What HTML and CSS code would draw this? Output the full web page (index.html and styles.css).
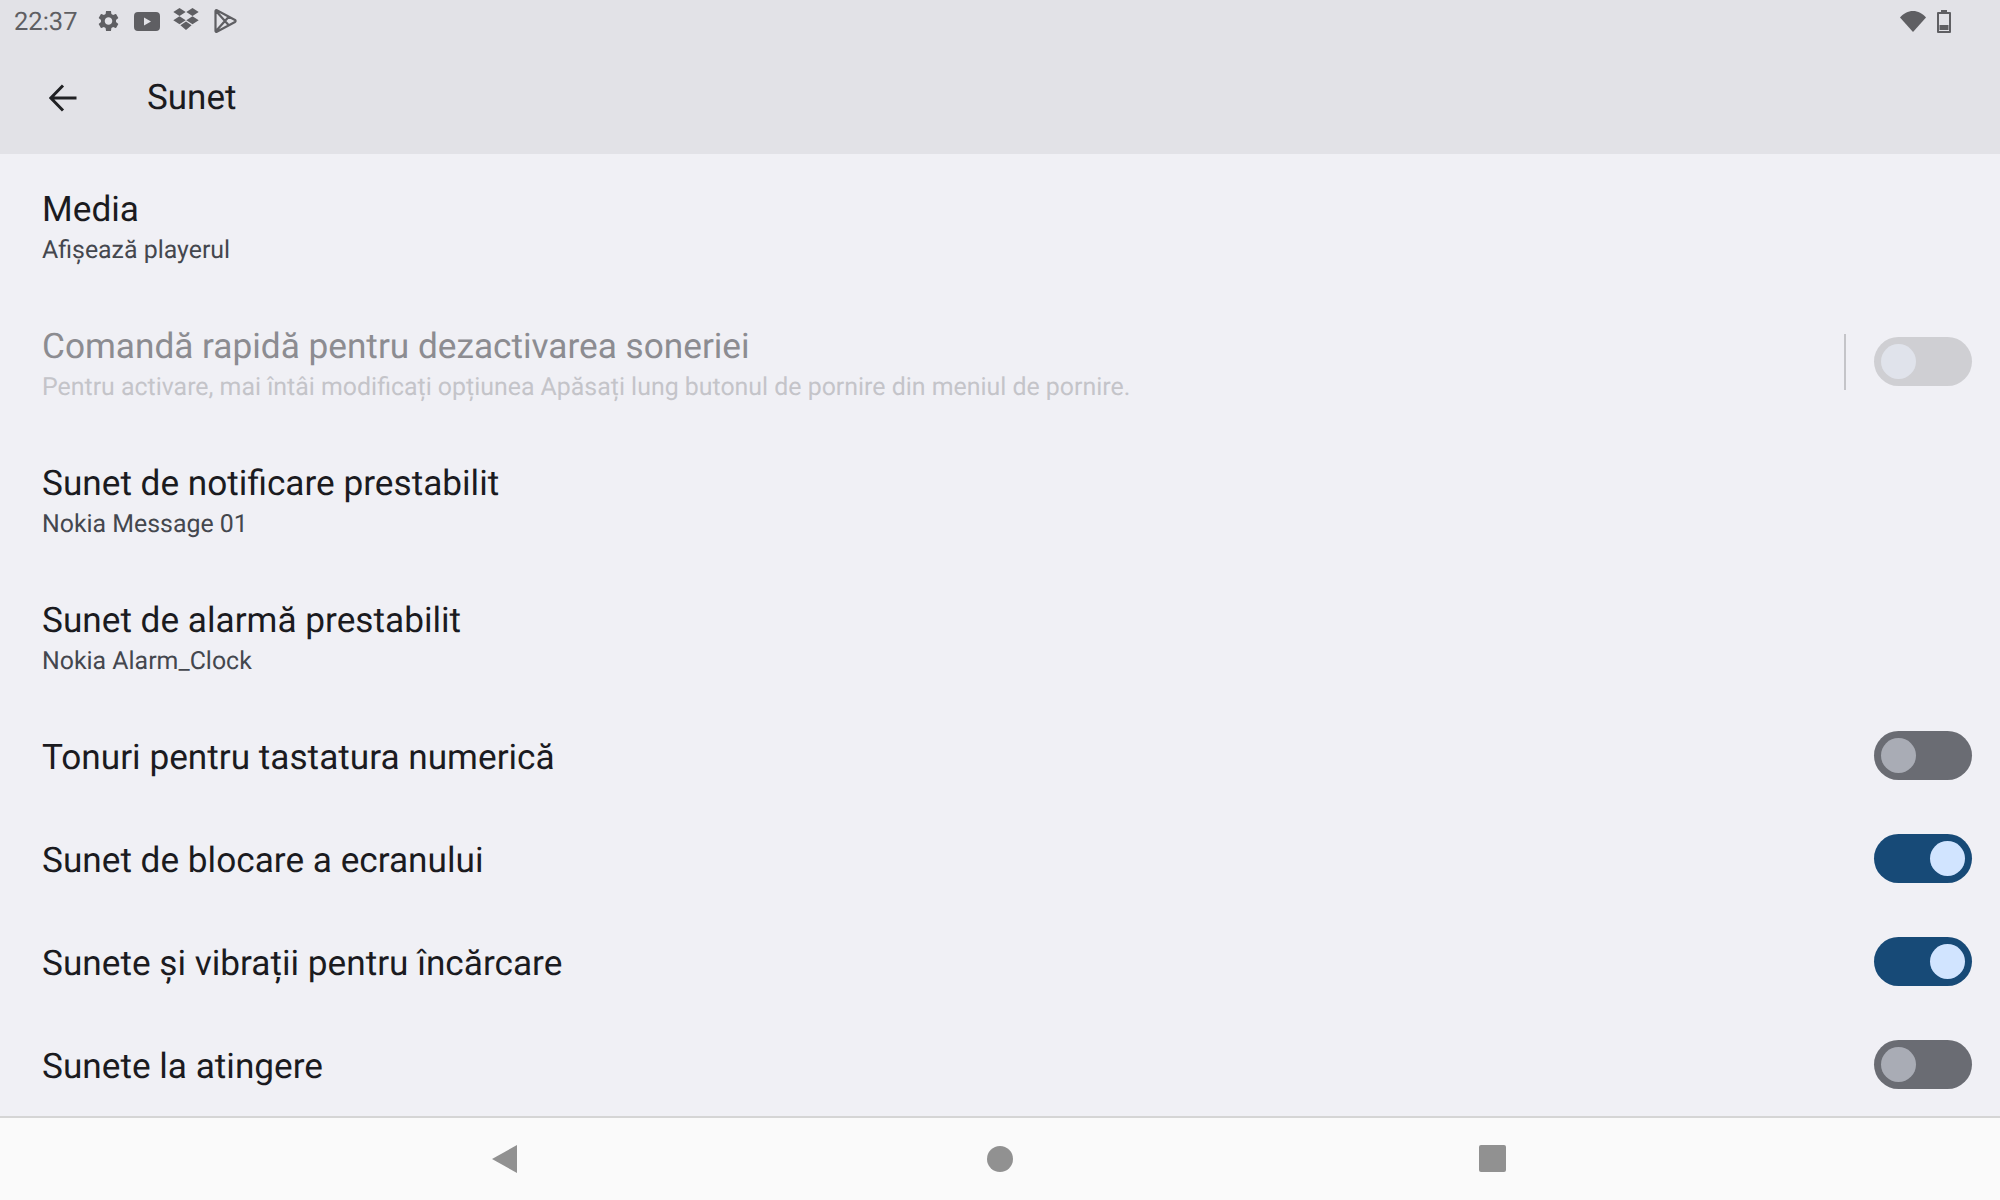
FILE: index.html
```html
<!DOCTYPE html>
<html lang="ro">
<head>
    <meta charset="UTF-8">
    <title>Sunet</title>
    <link rel="stylesheet" href="styles.css">
</head>
<body>
<div class="screen">
    <div class="top-bar">
        <div class="status-bar">
            <span class="clock">22:37</span>
            <svg class="ic-gear" viewBox="2.4 1.5 19.2 21" width="21" height="22"><path d="M19.14 12.94c.04-.3.06-.61.06-.94 0-.32-.02-.64-.07-.94l2.03-1.58c.18-.14.23-.41.12-.61l-1.92-3.32c-.12-.22-.37-.29-.59-.22l-2.39.96c-.5-.38-1.03-.7-1.62-.94l-.36-2.54c-.04-.24-.24-.41-.48-.41h-3.84c-.24 0-.43.17-.47.41l-.36 2.54c-.59.24-1.13.57-1.62.94l-2.39-.96c-.22-.08-.47 0-.59.22L2.74 8.87c-.12.21-.08.47.12.61l2.03 1.58c-.05.3-.09.63-.09.94s.02.64.07.94l-2.03 1.58c-.18.14-.23.41-.12.61l1.92 3.32c.12.22.37.29.59.22l2.39-.96c.5.38 1.03.7 1.62.94l.36 2.54c.05.24.24.41.48.41h3.84c.24 0 .44-.17.47-.41l.36-2.54c.59-.24 1.13-.56 1.62-.94l2.39.96c.22.08.47 0 .59-.22l1.92-3.32c.12-.22.07-.47-.12-.61l-2.01-1.58zM12 15.6c-1.98 0-3.6-1.62-3.6-3.6s1.62-3.6 3.6-3.6 3.6 1.62 3.6 3.6-1.62 3.6-3.6 3.6z"/></svg>
            <svg class="ic-youtube" viewBox="0 0 26 19" width="26" height="19"><path fill-rule="evenodd" d="M4 0h18a4 4 0 0 1 4 4v11a4 4 0 0 1-4 4H4a4 4 0 0 1-4-4V4a4 4 0 0 1 4-4zM10 5.5v8l7-4z"/></svg>
            <svg class="ic-dropbox" viewBox="0 0 26 22" width="26" height="22"><path d="M6.5 0l6.2 4-6.2 4L.3 4zM19.5 0l6.2 4-6.2 4-6.2-4zM6.5 8.2l6.2 4-6.2 4-6.2-4zM19.5 8.2l6.2 4-6.2 4-6.2-4zM13 13.6l5.6 3.6-5.6 4.8-5.6-4.8z"/></svg>
            <svg class="ic-play" viewBox="0 0 23 24" width="23" height="24"><path d="M1.500 2c0-.8.7-1 1.300-.7L21 11c.8.5.8 1.500 0 2L2.800 22.700c-.6.3-1.300.1-1.300-.7zM1.800 1.800L14.500 16M1.800 22.200L14.500 8" fill="none" stroke="#5f5f63" stroke-width="2.200" stroke-linejoin="round"/></svg>
            <span class="status-space"></span>
            <svg class="ic-wifi" viewBox="0 0 26 21" width="26" height="21"><path d="M0 6.500C3.500 2.500 8 0 13 0s9.500 2.500 13 6.500L13 21z"/></svg>
            <svg class="ic-battery" viewBox="0 0 14 23" width="14" height="23"><path fill-rule="evenodd" d="M4 0h6v2h3a1 1 0 0 1 1 1v19a1 1 0 0 1-1 1H1a1 1 0 0 1-1-1V3a1 1 0 0 1 1-1h3zM2 4v17h10V4z"/><path d="M2.500 15h9v5h-9z"/></svg>
        </div>
        <div class="toolbar">
            <svg class="back-arrow" viewBox="0 0 28 28" width="28" height="28"><path d="M27.500 14H2M14 1.500L1.800 14 14 26.500" fill="none" stroke="#202124" stroke-width="3"/></svg>
            <span class="toolbar-title">Sunet</span>
        </div>
    </div>

    <div class="list">
        <div class="row row-two">
            <div class="row-text">
                <p class="row-title">Media</p>
                <p class="row-sub">Afișează playerul</p>
            </div>
        </div>
        <div class="row row-two disabled">
            <div class="row-text">
                <p class="row-title">Comandă rapidă pentru dezactivarea soneriei</p>
                <p class="row-sub">Pentru activare, mai întâi modificați opțiunea Apăsați lung butonul de pornire din meniul de pornire.</p>
            </div>
            <span class="divider"></span>
            <span class="switch"><i></i></span>
        </div>
        <div class="row row-two">
            <div class="row-text">
                <p class="row-title">Sunet de notificare prestabilit</p>
                <p class="row-sub">Nokia Message 01</p>
            </div>
        </div>
        <div class="row row-two">
            <div class="row-text">
                <p class="row-title">Sunet de alarmă prestabilit</p>
                <p class="row-sub">Nokia Alarm_Clock</p>
            </div>
        </div>
        <div class="row row-one">
            <p class="row-title">Tonuri pentru tastatura numerică</p>
            <span class="switch"><i></i></span>
        </div>
        <div class="row row-one">
            <p class="row-title">Sunet de blocare a ecranului</p>
            <span class="switch on"><i></i></span>
        </div>
        <div class="row row-one">
            <p class="row-title">Sunete și vibrații pentru încărcare</p>
            <span class="switch on"><i></i></span>
        </div>
        <div class="row row-one">
            <p class="row-title">Sunete la atingere</p>
            <span class="switch"><i></i></span>
        </div>
    </div>

    <div class="nav-bar">
        <svg viewBox="0 0 25 28" width="25" height="28"><path d="M25 0v28L0 14z"/></svg>
        <svg class="nav-home" viewBox="0 0 26 26" width="26" height="26"><circle cx="13" cy="13" r="13"/></svg>
        <svg viewBox="0 0 27 27" width="27" height="27"><rect width="27" height="27" rx="2"/></svg>
    </div>
</div>
</body>
</html>
```

FILE: styles.css
```css
*{
    margin: 0;
    padding: 0;
    box-sizing: border-box;
}
html, body{
    height: 100%;
    overflow: hidden;
}
body{
    background: #f0f0f5;
    font-family: Roboto, "Noto Sans", sans-serif;
    text-rendering: geometricPrecision;
}
.screen{
    height: 1200px;
    display: flex;
    flex-direction: column;
}

.top-bar{
    height: 154px;
    flex: none;
    background: #e2e2e7;
}
.status-bar{
    height: 42px;
    padding: 0 49px 0 14px;
    display: flex;
    align-items: center;
    color: #5f5f63;
}
.status-bar svg{
    fill: #5f5f63;
    flex: none;
}
.clock{
    font-size: 25.5px;
    width: 84px;
    padding-top: 1px;
}
.ic-youtube{
    margin-left: 15px;
}
.ic-dropbox{
    margin-left: 13px;
    margin-top: -4px;
}
.ic-play{
    margin-left: 15px;
}
.status-space{
    flex: 1;
}
.ic-battery{
    margin-left: 11px;
}
.toolbar{
    height: 112px;
    padding-left: 49px;
    display: flex;
    align-items: center;
    padding-bottom: 1px;
}
.toolbar-title{
    margin-left: 70px;
    font-size: 35px;
    color: #1b1b1f;
}

.list{
    flex: 1;
    padding-top: 2px;
    overflow: hidden;
}
.row{
    display: flex;
    align-items: center;
    padding: 0 28px 0 42px;
}
.row-two{
    height: 137px;
}
.row-one{
    height: 103px;
    justify-content: space-between;
}
.row-text{
    flex: 1;
    min-width: 0;
    padding-top: 4px;
}
.row-title{
    font-size: 35.2px;
    line-height: 48px;
    color: #1b1b1f;
}
.row-sub{
    font-size: 24.900px;
    line-height: 36px;
    color: #44474e;
}
.row.disabled .row-title{
    color: #8c8c91;
}
.row.disabled .row-sub{
    color: #c4c4c9;
}
.row-one .row-title{
    padding-top: 2px;
}

.divider{
    width: 2px;
    height: 56px;
    background: #c4c4c8;
    margin-right: 28px;
}
.switch{
    width: 98px;
    height: 49px;
    border-radius: 25px;
    background: #6a6c73;
    padding: 7px;
    display: flex;
    flex: none;
}
.switch i{
    width: 35px;
    height: 35px;
    border-radius: 50%;
    background: #a9acb5;
}
.switch.on{
    background: #174a77;
    justify-content: flex-end;
}
.switch.on i{
    background: #d1e4ff;
}
.row.disabled .switch{
    background: #cfcfd3;
}
.row.disabled .switch i{
    background: #e0e3eb;
}

.nav-bar{
    height: 84px;
    flex: none;
    background: #fafafa;
    border-top: 2px solid #d5d5d5;
    display: flex;
    align-items: center;
    justify-content: center;
    padding-right: 2px;
    padding-bottom: 1px;
}
.nav-bar svg{
    fill: #919191;
}
.nav-home{
    margin: 0 466px 0 470px;
}
```
